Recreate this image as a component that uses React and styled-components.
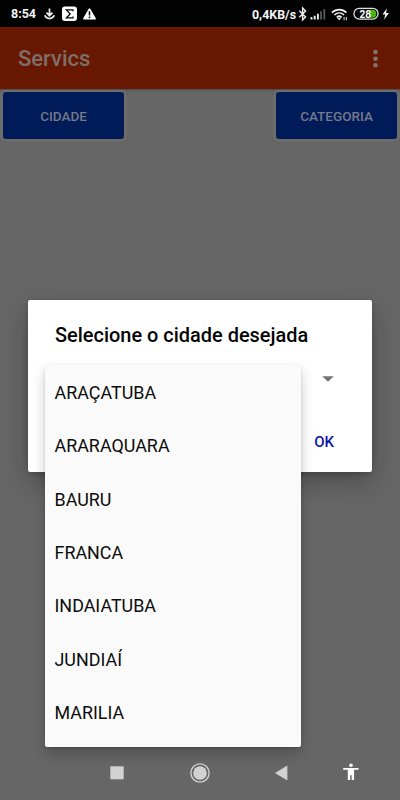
import React from 'react';
import styled, { createGlobalStyle } from 'styled-components';

const Global = createGlobalStyle`
  * { box-sizing: border-box; }
  body { margin: 0; background: #666; font-family: Roboto, "Liberation Sans", sans-serif; }
  button { font-family: inherit; border: 0; padding: 0; background: none; }
  svg { display: block; flex: none; }
`;

const Screen = styled.div`
  position: relative;
  display: flex;
  flex-direction: column;
  width: 400px;
  height: 800px;
  overflow: hidden;
  background: #666;
`;

const StatusBar = styled.div`
  display: flex;
  align-items: center;
  height: 27px;
  padding: 0 8px 0 11px;
  background: #020202;
  color: #f4f4f4;
`;

const Clock = styled.span`
  width: 33px;
  font-size: 12.5px;
  font-weight: 700;
  line-height: 27px;
  white-space: nowrap;
`;

const Speed = styled.span`
  margin: 1px 2px 0 auto;
  font-size: 12.4px;
  font-weight: 700;
  line-height: 27px;
  white-space: nowrap;
`;

const StatusIcons = styled.div`
  display: flex;
  align-items: center;
`;

const AppBar = styled.header`
  display: flex;
  align-items: center;
  justify-content: space-between;
  height: 62px;
  padding: 1px 21px 0 18px;
  background: #681800;
  box-shadow: 0 1px 2px rgba(0, 0, 0, 0.3);
`;

const AppTitle = styled.h1`
  margin: 0;
  font-size: 22px;
  font-weight: 500;
  color: #7e6e69;
`;

const Actions = styled.div`
  display: flex;
  justify-content: space-between;
  padding-top: 1px;
  flex: 1;
  align-items: flex-start;
`;

const FilterFrame = styled.div`
  padding: 2px 3px 3px;
  border-radius: 5px;
  background: #6c6c6c;
  box-shadow: 0 0 1px #594f4c;
`;

const FilterButton = styled.button`
  display: block;
  width: 121px;
  height: 47px;
  border-radius: 3px;
  background: #001b58;
  color: #75798a;
  font-size: 13.5px;
  font-weight: 500;
`;

const NavBar = styled.nav`
  display: flex;
  align-items: center;
  height: 53px;
  padding: 0 0 1px 110px;
`;

const NavIcon = styled.svg`
  margin-right: ${(p) => p.$gap}px;
`;

const Dialog = styled.section`
  position: absolute;
  left: 28px;
  top: 300px;
  width: 344px;
  height: 172px;
  display: flex;
  flex-direction: column;
  padding: 23px 38px 19px 27px;
  border-radius: 2px;
  background: #fff;
  box-shadow: 0 10px 26px rgba(0, 0, 0, 0.25), 0 2px 5px rgba(0, 0, 0, 0.2);
`;

const DialogTitle = styled.h2`
  margin: 0;
  font-size: 19.95px;
  line-height: 24px;
  font-weight: 500;
  white-space: nowrap;
  color: #050505;
`;

const Caret = styled.svg`
  margin: 29px 0 0 auto;
`;

const OkButton = styled.button`
  align-self: flex-end;
  margin-top: auto;
  font-size: 15px;
  line-height: 22px;
  font-weight: 500;
  color: #0a14a8;
`;

const Menu = styled.ul`
  position: absolute;
  left: 45px;
  top: 365px;
  width: 256px;
  height: 382px;
  margin: 0;
  padding: 1px 0 7px;
  list-style: none;
  border-radius: 2px;
  background: #fafafa;
  box-shadow: 0 7px 14px rgba(0, 0, 0, 0.2), 0 1px 3px rgba(0, 0, 0, 0.14);
`;

const MenuItem = styled.li`
  height: 53.33px;
  padding-left: 9.5px;
  font-size: 17.9px;
  line-height: 53.33px;
  color: #0c0c0c;
`;

const cities = ['ARAÇATUBA', 'ARARAQUARA', 'BAURU', 'FRANCA', 'INDAIATUBA', 'JUNDIAÍ', 'MARILIA'];

function NotificationIcons() {
  return (
    <svg width="54" height="16" viewBox="0 0 54 16">
      <path d="M5.5 2.5v7M2.5 6.7l3 3 3-3M.8 9.3c1.6 4.3 7.8 4.3 9.4 0" fill="none" stroke="#f2f2f2" strokeWidth="1.7" />
      <rect x="18" y=".6" width="15" height="14.5" rx="3" fill="#fff" />
      <path d="M29 5.3V3.9h-6.6l3.7 4-3.7 4H29v-1.4" fill="none" stroke="#050505" strokeWidth="1.3" />
      <path d="M45.5 3.2 51 12.6H40z" fill="#fff" stroke="#fff" strokeWidth="1.8" strokeLinejoin="round" />
      <path d="M45.5 5.2v4.2M45.5 10.6v1.6" stroke="#050505" strokeWidth="1.5" />
    </svg>
  );
}

function SystemIcons() {
  return (
    <svg width="94" height="16" viewBox="0 0 94 16">
      <path d="m1.3 4.7 6.3 6.2-3 3V2l3 3-6.3 6.3" fill="none" stroke="#eee" strokeWidth="1.4" />
      <path d="M13.5 11v2.6M16.7 9.7v3.9M19.9 7.7v5.9" stroke="#eee" strokeWidth="1.9" />
      <path d="M23 5.2v8.4M26.3 3v10.6" stroke="#555" strokeWidth="1.9" />
      <path d="M34 6.6c4.2-4.1 10.2-4.1 14.4 0M36.4 9c2.8-2.7 6.8-2.7 9.6 0M38.8 11.3c1.4-1.3 3.4-1.3 4.8 0" fill="none" stroke="#f2f2f2" strokeWidth="1.7" />
      <path d="m39 11.7 2.2 2.6 2.2-2.6z" fill="#f2f2f2" />
      <path d="M46.1 11v3.2M48.4 11v3.2" stroke="#ccc" strokeWidth="1.1" />
      <rect x="56" y="2.3" width="24" height="10.8" rx="5.2" fill="#050505" stroke="#ddd" strokeWidth="1.3" />
      <path d="M71.5 3.7h2.8a4 4 0 0 1 0 8h-2.8z" fill="#43b51e" />
      <text x="61.5" y="11.5" fill="#fff" fontFamily="Roboto, sans-serif" fontWeight="700" fontSize="10">28</text>
      <path d="m89 2.3-4.6 6.2h2.8L86 13.8l5-6.7h-2.9z" fill="#eee" />
    </svg>
  );
}

export default function App() {
  return (
    <>
      <Global />
      <Screen>
        <StatusBar>
          <Clock>8:54</Clock>
          <NotificationIcons />
          <Speed>0,4KB/s</Speed>
          <StatusIcons><SystemIcons /></StatusIcons>
        </StatusBar>
        <AppBar>
          <AppTitle>Servics</AppTitle>
          <svg width="7" height="20" viewBox="0 0 7 20" fill="#81736f">
            <circle cx="3.5" cy="3.1" r="2.3" /><circle cx="3.5" cy="9.7" r="2.3" /><circle cx="3.5" cy="16.3" r="2.3" />
          </svg>
        </AppBar>
        <Actions>
          <FilterFrame><FilterButton>CIDADE</FilterButton></FilterFrame>
          <FilterFrame><FilterButton>CATEGORIA</FilterButton></FilterFrame>
        </Actions>
        <NavBar>
          <NavIcon $gap={66} width="14" height="14"><rect x=".3" y=".3" width="13.4" height="13" fill="#d2d2d2" /></NavIcon>
          <NavIcon $gap={65} width="20" height="20">
            <circle cx="10" cy="10" r="9.1" fill="none" stroke="#d2d2d2" strokeWidth="1.4" /><circle cx="10" cy="10" r="6.8" fill="#d2d2d2" />
          </NavIcon>
          <NavIcon $gap={55} width="13" height="16"><path d="M12.4.5v15L0 8z" fill="#d2d2d2" /></NavIcon>
          <NavIcon $gap={0} width="16" height="20" fill="#fff">
            <circle cx="8" cy="2.2" r="1.8" /><path d="M.2 5h15.3v1.7h-4.4V17H8.7v-4.8H7.2V17H4.8V6.7H.2z" />
          </NavIcon>
        </NavBar>
        <Dialog role="dialog">
          <DialogTitle>Selecione o cidade desejada</DialogTitle>
          <Caret width="12" height="6"><path d="M.3.3h11.4L6 5.8z" fill="#727272" /></Caret>
          <OkButton>OK</OkButton>
        </Dialog>
        <Menu>
          {cities.map((city) => <MenuItem key={city}>{city}</MenuItem>)}
        </Menu>
      </Screen>
    </>
  );
}
